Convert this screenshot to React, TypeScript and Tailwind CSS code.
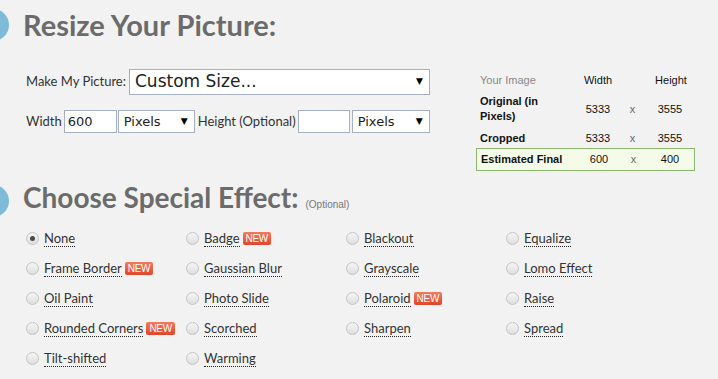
import React from "react";

type Effect = { name: string; isNew?: boolean; checked?: boolean };

const effects: Effect[] = [
  { name: "None", checked: true },
  { name: "Badge", isNew: true },
  { name: "Blackout" },
  { name: "Equalize" },
  { name: "Frame Border", isNew: true },
  { name: "Gaussian Blur" },
  { name: "Grayscale" },
  { name: "Lomo Effect" },
  { name: "Oil Paint" },
  { name: "Photo Slide" },
  { name: "Polaroid", isNew: true },
  { name: "Raise" },
  { name: "Rounded Corners", isNew: true },
  { name: "Scorched" },
  { name: "Sharpen" },
  { name: "Spread" },
  { name: "Tilt-shifted" },
  { name: "Warming" },
];

const Heading = ({ title, note, size }: { title: string; note?: string; size: string }) => {
  return (
    <div className="flex items-center">
      <div className="w-[32px] h-[32px] rounded-full bg-[#7dbbd9] -ml-[23px] shrink-0" />
      <h2 className={`ml-[14px] leading-[36px] font-bold text-[#6b6b6b] font-['Lato',sans-serif] ${size}`}>
        {title}
        {note && (
          <span className="ml-[7px] text-[10px] font-normal text-[#777] font-['Liberation_Sans',Arial,sans-serif]">
            {note}
          </span>
        )}
      </h2>
    </div>
  );
};

const FakeSelect = ({ label, className }: { label: string; className: string }) => {
  return (
    <div
      className={`flex items-center justify-between bg-white border border-[#a5b1c2] pl-[5px] pr-[6px] font-['DejaVu_Sans',sans-serif] text-[#222] ${className}`}
    >
      <span>{label}</span>
      <span className="text-[9px] text-black">▼</span>
    </div>
  );
};

const Radio = ({ checked }: { checked?: boolean }) => (
  <span className="w-[13px] h-[13px] rounded-full border border-[#c4c4c4] bg-gradient-to-b from-[#f6f6f6] to-[#dedede] flex items-center justify-center shrink-0">
    {checked && <span className="w-[5px] h-[5px] rounded-full bg-[#4a4a4a]" />}
  </span>
);

const NewBadge = () => (
  <span className="ml-[3px] px-[3px] h-[13px] leading-[13px] rounded-[2px] bg-gradient-to-b from-[#f57a5a] to-[#e0442a] text-white text-[10px] font-['Liberation_Sans',Arial,sans-serif] tracking-[-0.3px]">
    NEW
  </span>
);

export default function App() {
  return (
    <div className="w-[718px] h-[379px] overflow-hidden bg-[#f2f2f2] font-['Lato',sans-serif]">
      <div className="pt-[7px]">
        <Heading title="Resize Your Picture:" size="text-[29px]" />
      </div>

      <div className="flex mt-[26px]">
        <div className="pl-[26px] text-[13px] text-[#333] w-[450px]">
          <div className="flex items-center">
            <span>Make My Picture:</span>
            <FakeSelect label="Custom Size..." className="ml-[3px] w-[301px] h-[26px] text-[17px]" />
          </div>
          <div className="flex items-center mt-[15px]">
            <span>Width</span>
            <div className="ml-[2px] w-[53px] h-[23px] bg-white border border-[#a5b1c2] pl-[3px] flex items-center font-['DejaVu_Sans',sans-serif] text-[13px] text-[#222]">
              600
            </div>
            <FakeSelect label="Pixels" className="ml-[1px] w-[77px] h-[23px] text-[13px]" />
            <span className="ml-[3px]">Height (Optional)</span>
            <div className="ml-[2px] w-[52px] h-[23px] bg-white border border-[#a5b1c2]" />
            <FakeSelect label="Pixels" className="ml-[2px] w-[78px] h-[23px] text-[13px]" />
          </div>
        </div>

        <div className="ml-[26px] w-[219px] mt-[1px] font-['Liberation_Sans',Arial,sans-serif] text-[11px] text-[#111]">
          <div className="grid grid-cols-[100px_44px_25px_1fr] items-center h-[20px]">
            <span className="pl-[4px] text-[#888]">Your Image</span>
            <span className="text-center">Width</span>
            <span />
            <span className="text-center pl-[2px]">Height</span>
          </div>
          <div className="grid grid-cols-[100px_44px_25px_1fr] items-center h-[34px] mt-[2px]">
            <span className="pl-[4px] font-bold leading-[15px]">
              Original (in
              <br />
              Pixels)
            </span>
            <span className="text-center">5333</span>
            <span className="text-center text-[#666]">x</span>
            <span className="text-center">3555</span>
          </div>
          <div className="grid grid-cols-[100px_44px_25px_1fr] items-center h-[20px] mt-[2px]">
            <span className="pl-[4px] font-bold">Cropped</span>
            <span className="text-center">5333</span>
            <span className="text-center text-[#666]">x</span>
            <span className="text-center">3555</span>
          </div>
          <div className="grid grid-cols-[100px_44px_25px_1fr] items-center h-[23px] border border-[#8cb86b] bg-[#f5fbe9]">
            <span className="pl-[4px] font-bold">Estimated Final</span>
            <span className="text-center">600</span>
            <span className="text-center text-[#666]">x</span>
            <span className="text-center">400</span>
          </div>
        </div>
      </div>

      <div className="mt-[8px]">
        <Heading title="Choose Special Effect:" note="(Optional)" size="text-[28px]" />
      </div>

      <div className="grid grid-cols-[160px_160px_160px_160px] pl-[26px]">
        {effects.map((e) => (
          <div key={e.name} className="flex items-center h-[30px]">
            <Radio checked={e.checked} />
            <span className="ml-[5px] text-[13px] text-[#333] leading-[16px] border-b border-dotted border-[#222]">
              {e.name}
            </span>
            {e.isNew && <NewBadge />}
          </div>
        ))}
      </div>
    </div>
  );
}
